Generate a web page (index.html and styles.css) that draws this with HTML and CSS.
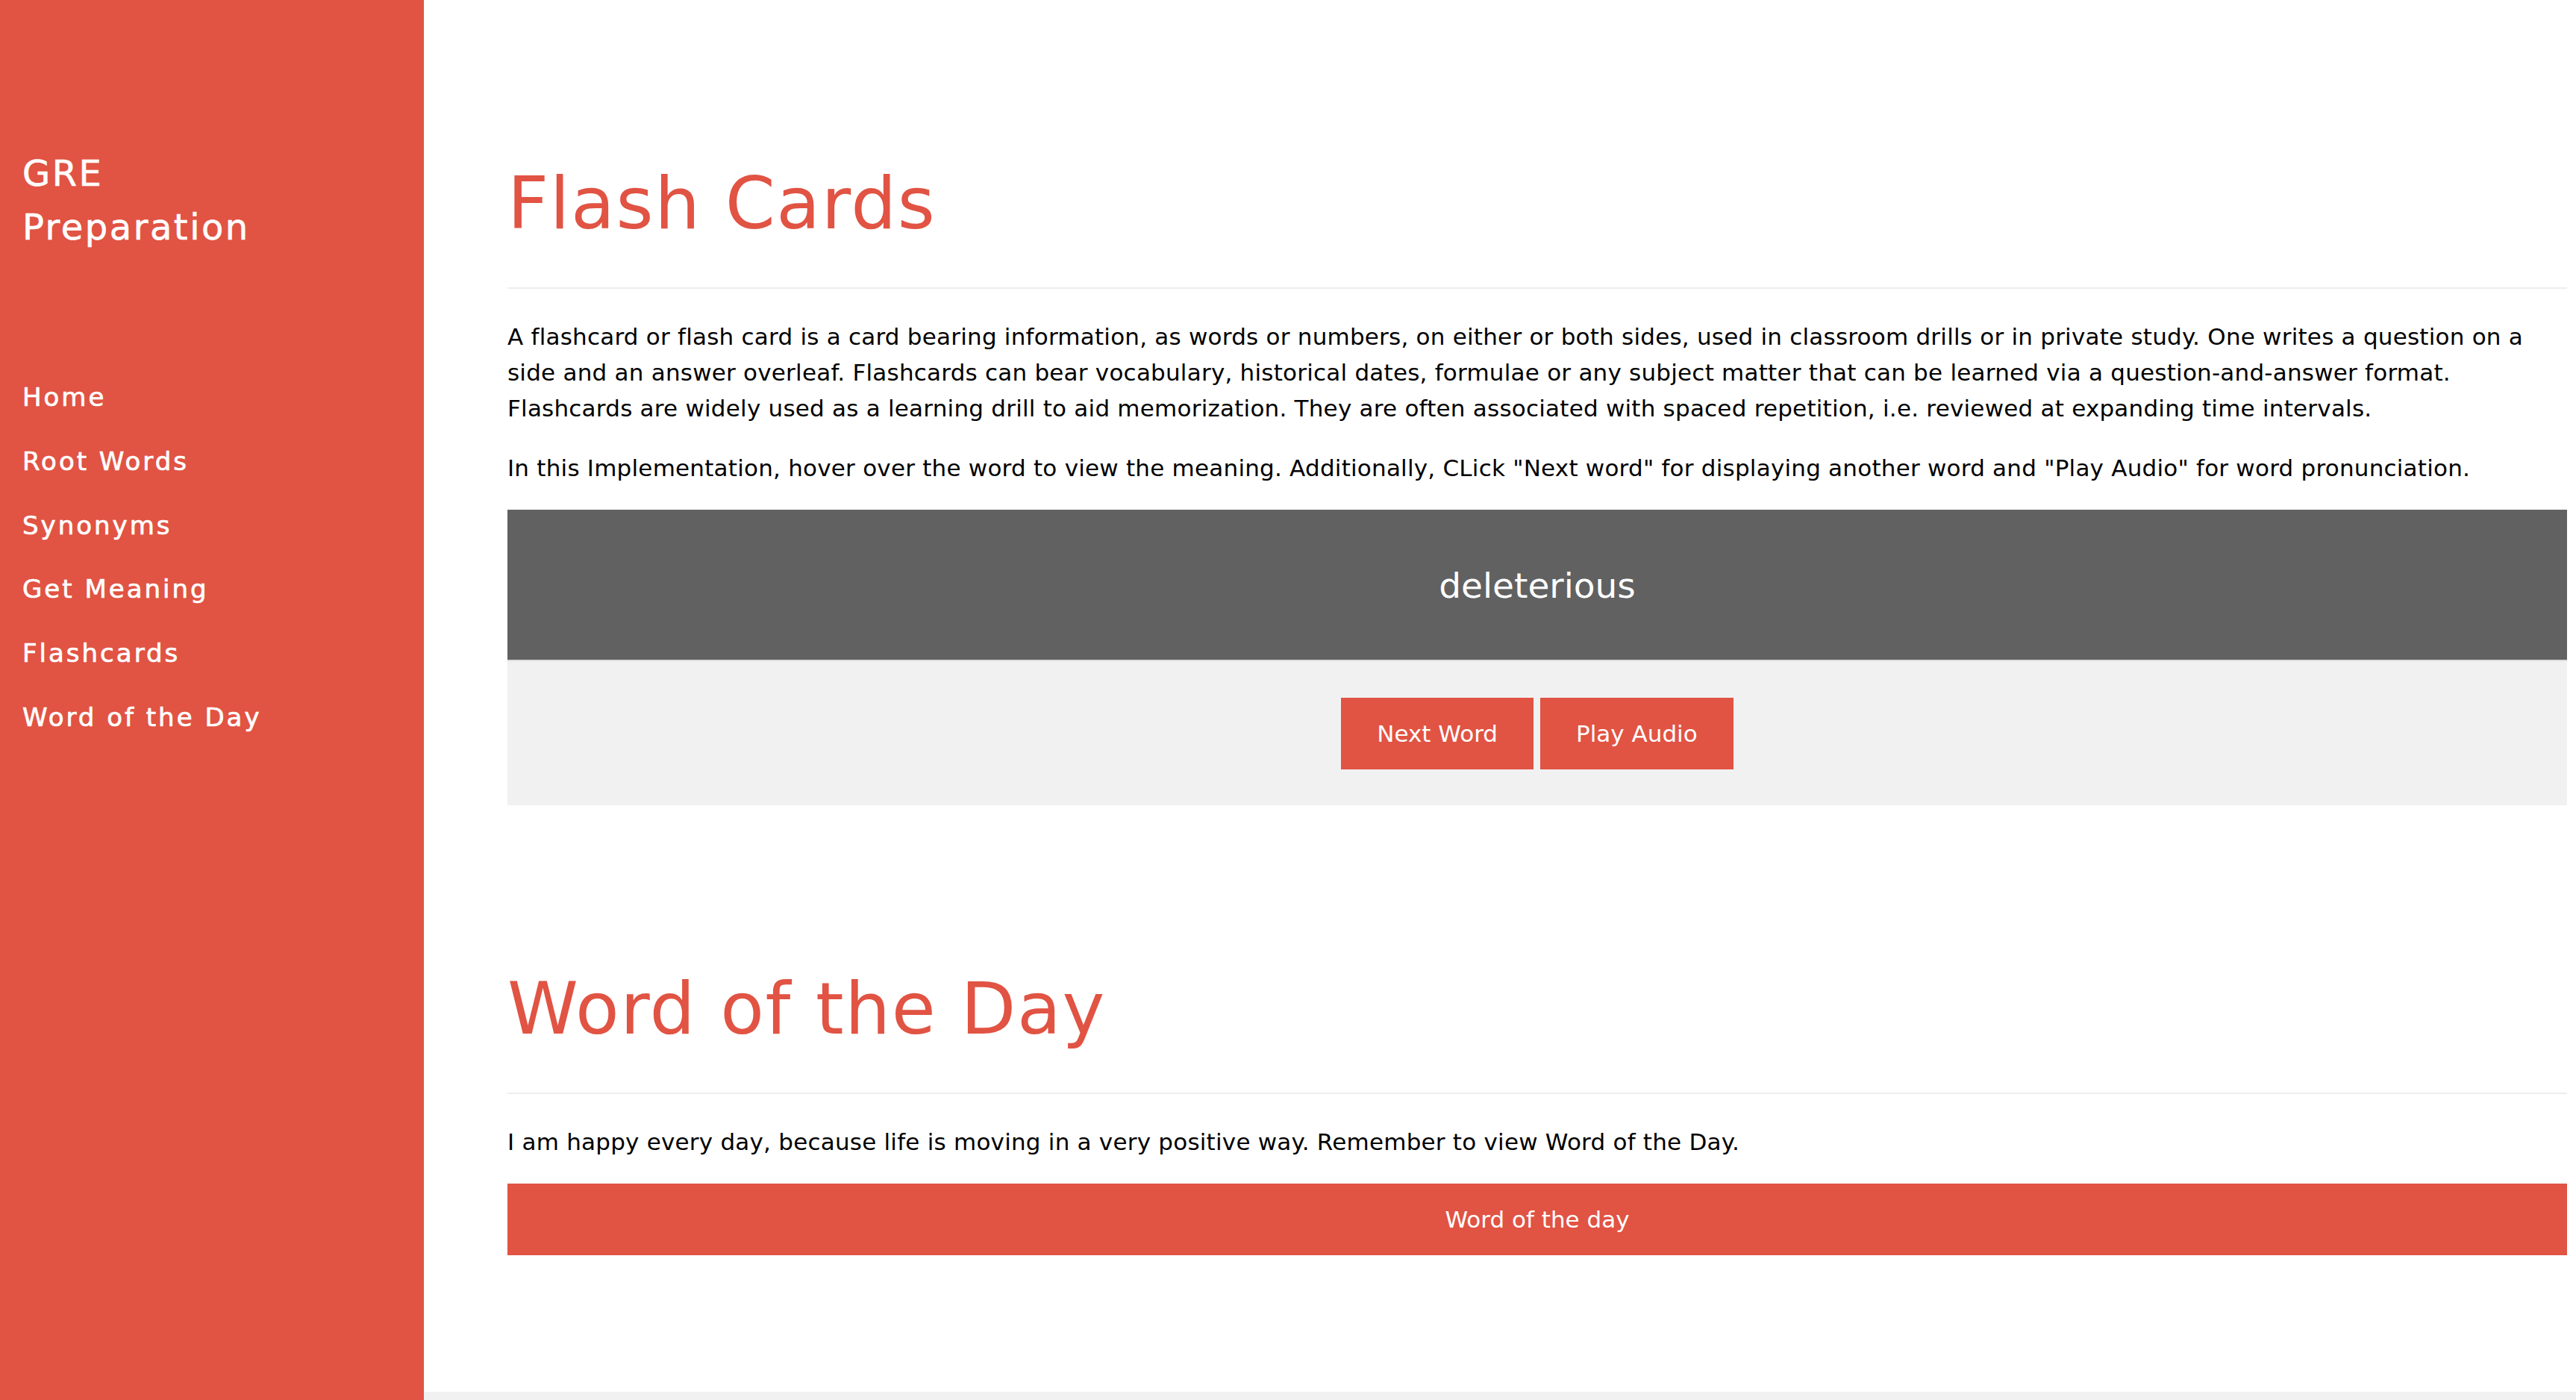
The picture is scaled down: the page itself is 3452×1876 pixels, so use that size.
FILE: index.html
```html
<!DOCTYPE html>
<html lang="en">
<head>
<meta charset="utf-8">
<title>GRE Preparation</title>
<link rel="stylesheet" href="styles.css">
</head>
<body>
<div class="layout">
  <aside class="sidebar">
    <h3 class="brand"><span class="brand-line">GRE</span><span class="brand-line">Preparation</span></h3>
    <nav class="nav">
      <a class="nav-item" href="#">Home</a>
      <a class="nav-item" href="#">Root Words</a>
      <a class="nav-item" href="#">Synonyms</a>
      <a class="nav-item" href="#">Get Meaning</a>
      <a class="nav-item" href="#">Flashcards</a>
      <a class="nav-item" href="#">Word of the Day</a>
    </nav>
  </aside>
  <main class="main">
    <div class="content">
      <section class="section">
        <h1 class="title">Flash Cards</h1>
        <hr class="rule">
        <p class="text">A flashcard or flash card is a card bearing information, as words or numbers, on either or both sides, used in classroom drills or in private study. One writes a question on a side and an answer overleaf. Flashcards can bear vocabulary, historical dates, formulae or any subject matter that can be learned via a question-and-answer format. Flashcards are widely used as a learning drill to aid memorization. They are often associated with spaced repetition, i.e. reviewed at expanding time intervals.</p>
        <p class="text">In this Implementation, hover over the word to view the meaning. Additionally, CLick "Next word" for displaying another word and "Play Audio" for word pronunciation.</p>
        <div class="card">
          <div class="card-word">deleterious</div>
          <div class="card-actions">
            <button class="btn">Next Word</button>
            <button class="btn">Play Audio</button>
          </div>
        </div>
      </section>
      <section class="section">
        <h1 class="title">Word of the Day</h1>
        <hr class="rule">
        <p class="text">I am happy every day, because life is moving in a very positive way. Remember to view Word of the Day.</p>
        <button class="btn btn-block">Word of the day</button>
      </section>
    </div>
    <div class="footer-strip"></div>
  </main>
</div>
</body>
</html>
```
FILE: styles.css
```css
* { box-sizing: border-box; }

html, body {
  margin: 0;
  padding: 0;
  background: #ffffff;
}

body {
  font-family: "DejaVu Sans", "Noto Sans", sans-serif;
  color: #000000;
}

.layout {
  display: flex;
  min-height: 100vh;
}

.sidebar {
  width: 568px;
  flex: 0 0 568px;
  background: #e15343;
  color: #ffffff;
  padding-top: 196px;
}

.brand {
  margin: 0;
  padding: 0 30px;
  font-size: 48px;
  line-height: 72px;
  font-weight: normal;
  letter-spacing: 2.5px;
  -webkit-text-stroke: 0.6px #ffffff;
}

.brand-line { display: block; }

.nav {
  margin-top: 150px;
  display: flex;
  flex-direction: column;
}

.nav-item {
  display: block;
  padding: 18px 30px;
  font-size: 34px;
  line-height: 49.8px;
  letter-spacing: 3px;
  color: #ffffff;
  text-decoration: none;
  -webkit-text-stroke: 0.7px #ffffff;
}

.main {
  flex: 1;
  display: flex;
  flex-direction: column;
  min-width: 0;
}

.content {
  padding: 0 12px 0 112px;
}

.section {
  padding-top: 216px;
}

.title {
  margin: 0;
  font-size: 96px;
  line-height: 115.2px;
  font-weight: normal;
  letter-spacing: 1.6px;
  color: #e15343;
}

.rule {
  margin: 54px 0 40px;
  border: 0;
  border-top: 2px solid #eeeeee;
  height: 0;
}

.text {
  margin: 32px 0;
  font-size: 31px;
  line-height: 48px;
  letter-spacing: 0.22px;
}

.card {
  margin-top: 32px;
}

.card-word {
  background: #616161;
  color: #ffffff;
  text-align: center;
  font-size: 47px;
  line-height: 66px;
  padding: 69px 0 66px;
  border-bottom: 2px solid #dcdcdc;
}

.card-actions {
  background: #f1f1f1;
  display: flex;
  justify-content: center;
  gap: 9px;
  padding: 48.5px 0;
}

.btn {
  border: 0;
  margin: 0;
  background: #e15343;
  color: #ffffff;
  font-family: inherit;
  font-size: 31px;
  line-height: 96px;
  height: 96px;
  padding: 0 48px;
  cursor: pointer;
}

.btn-block {
  display: block;
  width: 100%;
  padding: 0;
  text-align: center;
}

.footer-strip {
  margin-top: auto;
  height: 11px;
  background: #f1f1f1;
}
```
